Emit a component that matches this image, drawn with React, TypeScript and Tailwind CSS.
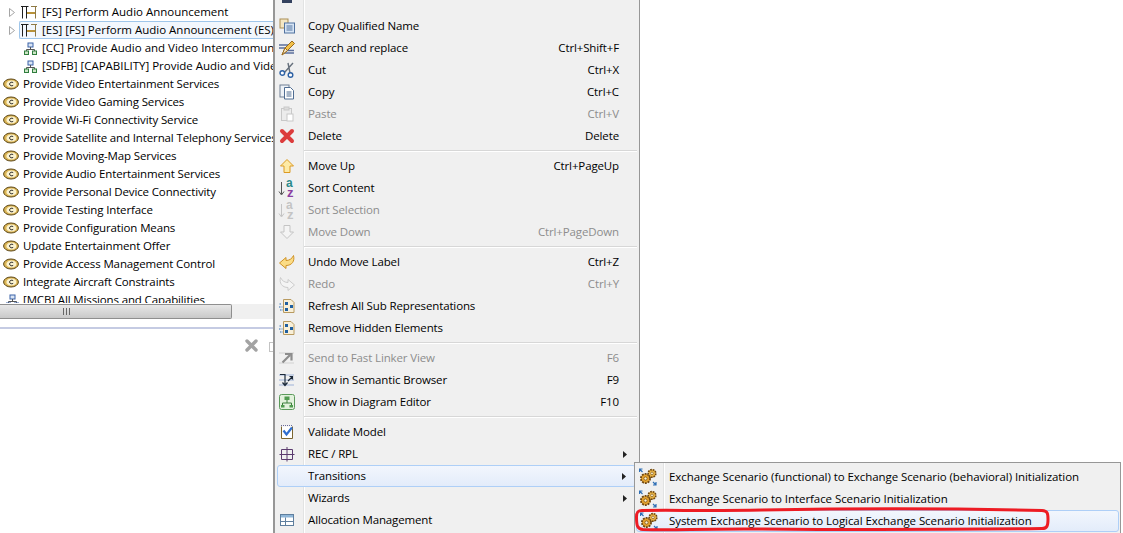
import { ReactNode } from 'react';

const font = { fontFamily: '"Open Sans", "Noto Sans", sans-serif' };

const CapIcon = () => (
  <svg width="16" height="12" viewBox="0 0 16 12" className="shrink-0">
    <ellipse cx="8" cy="6" rx="7.4" ry="5" fill="#dcb656" stroke="#5a4412" strokeWidth="1" />
    <ellipse cx="8.4" cy="6" rx="5" ry="3.6" fill="#fbf3d0" />
    <path d="M10.2 4.6 C8.6 3.6 6.6 4.4 6.6 6 C6.6 7.6 8.6 8.4 10.2 7.4" fill="none" stroke="#1c1c1c" strokeWidth="0.9" />
  </svg>
);

const ScenarioIcon = () => (
  <svg width="16" height="14" viewBox="0 0 16 14" className="shrink-0">
    <path d="M0 1.5 H7.5 M1.5 1 V13.5 M5.5 1 V13.5" stroke="#1f1f1f" strokeWidth="1" fill="none" />
    <path d="M6 8 H15" stroke="#b8923a" strokeWidth="2" />
    <path d="M10 1.5 H16 M14.5 1 V13.5" stroke="#8f7a45" strokeWidth="1" fill="none" />
  </svg>
);

const TreeIcon = ({ color = '#2f7d3d' }: { color?: string }) => (
  <svg width="13" height="13" viewBox="0 0 13 13" className="shrink-0">
    <rect x="4" y="1" width="5" height="4" fill="#dbe6f5" stroke="#3a62a8" />
    <path d="M6.5 5 V7.5 M2.5 9 V7.5 H10.5 V9" stroke="#555" fill="none" />
    <rect x="0.5" y="9" width="4" height="3.5" fill="#cfe6c8" stroke={color} />
    <rect x="8.5" y="9" width="4" height="3.5" fill="#cfe6c8" stroke={color} />
  </svg>
);

const Caret = () => (
  <svg width="6" height="9" viewBox="0 0 6 9" className="shrink-0">
    <path d="M0.5 0.5 L5.5 4.5 L0.5 8.5 Z" fill="#fff" stroke="#a5a5a5" />
  </svg>
);

const Gears = () => (
  <svg width="18" height="18" viewBox="0 0 18 18">
    <circle cx="6.5" cy="10.5" r="4.6" fill="#e3a22e" stroke="#6e4610" strokeWidth="1.8" strokeDasharray="1.9 1" />
    <circle cx="6.5" cy="10.5" r="1.6" fill="#fff3cf" stroke="#6e4610" strokeWidth="0.7" />
    <circle cx="13" cy="5.4" r="3.8" fill="#eab444" stroke="#6e4610" strokeWidth="1.6" strokeDasharray="1.7 0.9" />
    <circle cx="13" cy="5.4" r="1.3" fill="#fff3cf" stroke="#6e4610" strokeWidth="0.6" />
    <path d="M0.5 1 L3.5 4 M0.5 4 V1 H3.5" stroke="#2f6fb5" strokeWidth="1.2" fill="none" />
    <path d="M17 17 L14 14 M17 14 V17 H14" stroke="#2f6fb5" strokeWidth="1.2" fill="none" />
  </svg>
);

const DiagramIcon = () => (
  <svg width="16" height="16" viewBox="0 0 16 16">
    <path d="M4.5 1.5 H12 L15 4.5 V14.5 H4.5 Z" fill="#f8efd8" stroke="#b89a60" />
    <rect x="6" y="4" width="3" height="3" fill="#1f5fa0" />
    <rect x="11" y="7" width="3" height="3" fill="#1f5fa0" />
    <rect x="6" y="10" width="3" height="3" fill="#1f5fa0" />
    <path d="M0.5 6 H3 M0 9 H3.5 M1 12 H4" stroke="#2f6fb5" strokeDasharray="1.5 1" />
  </svg>
);

const icons: Record<string, ReactNode> = {
  qualified: (
    <svg width="16" height="16" viewBox="0 0 16 16">
      <rect x="1" y="1" width="8" height="9" fill="#f4e7c4" stroke="#a98d55" />
      <rect x="5.5" y="5" width="10" height="10" fill="#d7e5f5" stroke="#51729f" />
      <path d="M7.5 8 H13.5 M7.5 10 H13.5 M7.5 12 H13.5" stroke="#51729f" />
    </svg>
  ),
  search: (
    <svg width="16" height="16" viewBox="0 0 16 16">
      <path d="M0 5 H9 M0 8 H7 M5 13 H15 M7 10.5 H15" stroke="#5a6d9a" strokeWidth="1.5" />
      <path d="M3 15 L6 8 L13 1 L15.5 3.5 L8.5 10.5 Z" fill="#f2c04a" stroke="#9a6b1c" />
      <path d="M3 15 L6 8 L8.5 10.5 Z" fill="#f7ead0" stroke="#9a6b1c" />
    </svg>
  ),
  cut: (
    <svg width="16" height="16" viewBox="0 0 16 16">
      <path d="M14 1 L5 11 M9 1 L11 11" stroke="#66707c" strokeWidth="1.4" fill="none" />
      <circle cx="3.3" cy="11" r="2.3" fill="#fff" stroke="#2e62a5" strokeWidth="1.4" />
      <circle cx="11.5" cy="13" r="2.3" fill="#fff" stroke="#2e62a5" strokeWidth="1.4" />
    </svg>
  ),
  copy: (
    <svg width="16" height="16" viewBox="0 0 16 16">
      <rect x="1" y="1" width="9" height="12" fill="#eef2f7" stroke="#6f7f94" />
      <path d="M5.5 3.5 H11.5 L14.5 6.5 V15 H5.5 Z" fill="#fff" stroke="#4f6c92" />
      <path d="M7.5 8 H12.5 M7.5 10 H12.5 M7.5 12 H12.5" stroke="#4f6c92" />
    </svg>
  ),
  paste: (
    <svg width="16" height="16" viewBox="0 0 16 16">
      <rect x="2.5" y="2.5" width="10" height="12" fill="#ececec" stroke="#c8c8c8" />
      <rect x="5" y="1" width="5" height="3" fill="#dcdcdc" stroke="#c8c8c8" />
      <rect x="8" y="8" width="6" height="7" fill="#fff" stroke="#c8c8c8" />
    </svg>
  ),
  del: (
    <svg width="16" height="16" viewBox="0 0 16 16">
      <path d="M3 3 L13 13 M13 3 L3 13" stroke="#dc3c3c" strokeWidth="4" strokeLinecap="round" />
    </svg>
  ),
  up: (
    <svg width="16" height="16" viewBox="0 0 16 16">
      <path d="M8 1.5 L14.5 8 H11 V14.5 H5 V8 H1.5 Z" fill="#fdeaa6" stroke="#dc9a22" />
    </svg>
  ),
  sort: (
    <svg width="18" height="18" viewBox="0 0 18 18" fontFamily="Liberation Sans, sans-serif">
      <path d="M3.5 3 V15 M1 12.5 L3.5 16 L6 12.5" stroke="#555" fill="none" />
      <text x="8" y="8" fontSize="12" fontWeight="700" fill="#2a8a8a">a</text>
      <text x="9" y="17.5" fontSize="13" fontWeight="700" fill="#8a3fa0">z</text>
    </svg>
  ),
  sortOff: (
    <svg width="18" height="18" viewBox="0 0 18 18" fontFamily="Liberation Sans, sans-serif">
      <path d="M3.5 3 V15 M1 12.5 L3.5 16 L6 12.5" stroke="#c4c4c4" fill="none" />
      <text x="8" y="8" fontSize="12" fontWeight="700" fill="#c4c4c4">a</text>
      <text x="9" y="17.5" fontSize="13" fontWeight="700" fill="#c4c4c4">z</text>
    </svg>
  ),
  down: (
    <svg width="16" height="16" viewBox="0 0 16 16">
      <path d="M8 14.5 L14.5 8 H11 V1.5 H5 V8 H1.5 Z" fill="#f4f4f4" stroke="#c4c4c4" />
    </svg>
  ),
  undo: (
    <svg width="16" height="16" viewBox="0 0 16 16">
      <path d="M0.5 9 L7 3.5 V6.5 C10 6.5 13 5 14.5 1.5 C16 7 13 11.5 7 11.5 V14.5 Z" fill="#fbdc85" stroke="#cf9226" />
    </svg>
  ),
  redo: (
    <svg width="16" height="16" viewBox="0 0 16 16">
      <path d="M15.5 9 L9 3.5 V6.5 C6 6.5 3 5 1.5 1.5 C0 7 3 11.5 9 11.5 V14.5 Z" fill="#f4f4f4" stroke="#cccccc" />
    </svg>
  ),
  diagram: <DiagramIcon />,
  linker: (
    <svg width="16" height="16" viewBox="0 0 16 16">
      <path d="M0 3 H15 M0 13 H15" stroke="#dcdcdc" strokeWidth="1.5" />
      <path d="M3.5 12.5 L11 5 M6 4 H12.5 V10.5" stroke="#8d8d8d" strokeWidth="2.2" fill="none" />
    </svg>
  ),
  semantic: (
    <svg width="16" height="16" viewBox="0 0 16 16">
      <path d="M0 3 H15 M0 8 H15 M0 13 H15" stroke="#b9c6e0" strokeWidth="1.5" />
      <path d="M1 2.5 H6 V13 M3.5 10.5 L6 13.5 L8.5 10.5 M9 9 L13 5 M10.5 4.5 H13.5 V7.5" stroke="#1c2a3a" strokeWidth="1.2" fill="none" />
    </svg>
  ),
  editor: (
    <svg width="16" height="16" viewBox="0 0 16 16">
      <rect x="0.5" y="0.5" width="15" height="15" rx="2" fill="#e2f1dc" stroke="#5b9a5b" />
      <rect x="5.5" y="2.5" width="5" height="3.5" fill="#4f9a4f" />
      <path d="M8 6 V9 M3.5 11 V9 H12.5 V11" stroke="#3c7f3c" fill="none" />
      <rect x="2" y="11" width="3.5" height="2.5" fill="#4f9a4f" />
      <rect x="10.5" y="11" width="3.5" height="2.5" fill="#4f9a4f" />
    </svg>
  ),
  validate: (
    <svg width="16" height="16" viewBox="0 0 16 16">
      <path d="M2.5 2.5 V14.5 H13.5 V2.5" fill="#fff" stroke="#7a6530" />
      <path d="M2 1.5 H14" stroke="#6a6a9a" strokeDasharray="1 1" />
      <path d="M4.5 6.5 L7.5 10.5 L13 3.5" stroke="#2f6fd0" strokeWidth="2.2" fill="none" />
    </svg>
  ),
  rec: (
    <svg width="16" height="16" viewBox="0 0 16 16">
      <path d="M2.5 3.5 H13.5 V13.5 H2.5 Z M8 1 V15.5 M0.5 8.5 H15.5" stroke="#5b3a6e" fill="none" />
    </svg>
  ),
  alloc: (
    <svg width="16" height="16" viewBox="0 0 16 16">
      <rect x="1.5" y="2.5" width="13" height="11" fill="#fff" stroke="#5f7f9e" />
      <rect x="2" y="3" width="12" height="2.5" fill="#8fb6d8" />
      <path d="M6.5 5.5 V13.5 M1.5 9.5 H14.5" stroke="#5f7f9e" />
    </svg>
  ),
};

type Item = { label: string; key?: string; icon?: string; off?: boolean; sub?: boolean; hot?: boolean };

const groups: Item[][] = [
  [
    { label: 'Copy Qualified Name', icon: 'qualified' },
    { label: 'Search and replace', key: 'Ctrl+Shift+F', icon: 'search' },
    { label: 'Cut', key: 'Ctrl+X', icon: 'cut' },
    { label: 'Copy', key: 'Ctrl+C', icon: 'copy' },
    { label: 'Paste', key: 'Ctrl+V', icon: 'paste', off: true },
    { label: 'Delete', key: 'Delete', icon: 'del' },
  ],
  [
    { label: 'Move Up', key: 'Ctrl+PageUp', icon: 'up' },
    { label: 'Sort Content', icon: 'sort' },
    { label: 'Sort Selection', icon: 'sortOff', off: true },
    { label: 'Move Down', key: 'Ctrl+PageDown', icon: 'down', off: true },
  ],
  [
    { label: 'Undo Move Label', key: 'Ctrl+Z', icon: 'undo' },
    { label: 'Redo', key: 'Ctrl+Y', icon: 'redo', off: true },
    { label: 'Refresh All Sub Representations', icon: 'diagram' },
    { label: 'Remove Hidden Elements', icon: 'diagram' },
  ],
  [
    { label: 'Send to Fast Linker View', key: 'F6', icon: 'linker', off: true },
    { label: 'Show in Semantic Browser', key: 'F9', icon: 'semantic' },
    { label: 'Show in Diagram Editor', key: 'F10', icon: 'editor' },
  ],
  [
    { label: 'Validate Model', icon: 'validate' },
    { label: 'REC / RPL', icon: 'rec', sub: true },
    { label: 'Transitions', sub: true, hot: true },
    { label: 'Wizards', sub: true },
    { label: 'Allocation Management', icon: 'alloc' },
  ],
];

const capabilities = [
  'Provide Video Entertainment Services',
  'Provide Video Gaming Services',
  'Provide Wi-Fi Connectivity Service',
  'Provide Satellite and Internal Telephony Services',
  'Provide Moving-Map Services',
  'Provide Audio Entertainment Services',
  'Provide Personal Device Connectivity',
  'Provide Testing Interface',
  'Provide Configuration Means',
  'Update Entertainment Offer',
  'Provide Access Management Control',
  'Integrate Aircraft Constraints',
];

const subItems = [
  'Exchange Scenario (functional) to Exchange Scenario (behavioral) Initialization',
  'Exchange Scenario to Interface Scenario Initialization',
  'System Exchange Scenario to Logical Exchange Scenario Initialization',
];

const Arrow = () => (
  <svg width="4" height="7" viewBox="0 0 4 7" className="shrink-0">
    <path d="M0 0 L4 3.5 L0 7 Z" fill="#222" />
  </svg>
);

const MenuRow = ({ item }: { item: Item }) => (
  <div
    className={`flex h-[22px] items-center ${item.hot ? 'ml-[2px] mr-[3px] rounded-[3px] border border-[#aecff7] bg-gradient-to-b from-[#f2f6fd] to-[#e3ecfa]' : 'mx-[3px]'}`}
  >
    <div className="flex w-[18px] shrink-0 items-center justify-center">{item.icon ? icons[item.icon] : null}</div>
    <span className={`ml-[12px] whitespace-nowrap ${item.off ? 'text-[#8d8d8d]' : 'text-black'}`}>{item.label}</span>
    <span className={`ml-auto mr-[17px] whitespace-nowrap ${item.off ? 'text-[#8d8d8d]' : 'text-black'}`}>{item.key}</span>
    {item.sub ? <div className="-ml-[6px] mr-[9px]"><Arrow /></div> : null}
  </div>
);

const TreeRow = ({ children, className = '' }: { children: ReactNode; className?: string }) => (
  <div className={`flex h-[18px] items-center whitespace-nowrap text-black ${className}`}>{children}</div>
);

export default function App() {
  return (
    <div className="relative flex h-[533px] w-[1123px] overflow-hidden bg-white text-[11.5px] leading-none tracking-[-0.13px]" style={font}>
      {/* Left: project explorer */}
      <div className="flex w-[273px] shrink-0 flex-col">
        <div className="h-[303px] overflow-hidden pt-[3px]">
          <TreeRow className="pl-[9px] tracking-[-0.01px]">
            <Caret />
            <span className="ml-[6px]"><ScenarioIcon /></span>
            <span className="ml-[5px]">[FS] Perform Audio Announcement</span>
          </TreeRow>
          <TreeRow className="pl-[9px] tracking-[-0.01px]">
            <Caret />
            <div className="ml-[4px] flex h-[18px] flex-1 items-center overflow-hidden rounded-l-[2px] border border-r-0 border-[#9fc6ea] bg-[#f2f7fd] pl-[1px]">
              <ScenarioIcon />
              <span className="ml-[5px]">[ES] [FS] Perform Audio Announcement (ES)</span>
            </div>
          </TreeRow>
          <TreeRow className="overflow-hidden pl-[24px] tracking-[-0.01px]">
            <TreeIcon />
            <span className="ml-[5px]">[CC] Provide Audio and Video Intercommunication Services</span>
          </TreeRow>
          <TreeRow className="overflow-hidden pl-[24px] tracking-[-0.01px]">
            <TreeIcon />
            <span className="ml-[5px]">[SDFB] [CAPABILITY] Provide Audio and Video Intercommunication</span>
          </TreeRow>
          {capabilities.map((name) => (
            <TreeRow key={name} className="overflow-hidden pl-[3px]">
              <CapIcon />
              <span className="ml-[4px]">{name}</span>
            </TreeRow>
          ))}
          <TreeRow className="overflow-hidden pl-[6px]">
            <TreeIcon color="#3a62a8" />
            <span className="ml-[4px]">[MCB] All Missions and Capabilities</span>
          </TreeRow>
        </div>
        {/* horizontal scroll bar */}
        <div className="mt-[1px] flex h-[15px] items-stretch bg-[#f0f0f0]">
          <div className="flex w-[232px] items-center rounded-r-[2px] border border-l-0 border-[#8f8f8f] bg-gradient-to-b from-[#e8e8e8] to-[#c9c9c9] pl-[63px]">
            <div className="flex h-[7px] w-[7px] justify-center border-x border-[#666]">
              <div className="h-[7px] w-px bg-[#666]" />
            </div>
          </div>
        </div>
        <div className="mt-[8px] h-[2px] bg-[#c5cbe3]" />
        <div className="flex justify-end pt-[9px]">
          <svg width="13" height="13" viewBox="0 0 13 13" className="mr-[11px] mt-[1px]">
            <path d="M2 2 L11 11 M11 2 L2 11" stroke="#a3a3a3" strokeWidth="3.4" strokeLinecap="round" />
          </svg>
          <div className="mt-[4px] h-[10px] w-[4px] border border-r-0 border-[#c3c3c3]" />
        </div>
      </div>

      {/* Context menu */}
      <div className="relative h-[533px] w-[367px] shrink-0 border-x border-l-2 border-x-[#979797] bg-[#f0f0f0] pt-[11px]">
        <div className="absolute bottom-0 left-[28px] top-0 w-[2px] border-l border-[#e2e3e3] bg-white" />
        <div className="absolute left-[4px] top-[-11px]">
          <svg width="16" height="16" viewBox="0 0 16 16">
            <path d="M3 2 H13 V14 H3 Z" fill="#33415e" />
          </svg>
        </div>
        {groups.map((group, i) => (
          <div key={i} className="relative">
            {i > 0 ? <div className="my-[3px] ml-[29px] mr-[2px] h-[2px] border-t border-[#d7d7d7] bg-white" /> : <div className="h-[4px]" />}
            {group.map((item) => (
              <MenuRow key={item.label} item={item} />
            ))}
          </div>
        ))}
      </div>

      <div className="flex-1 bg-white" />

      {/* Submenu */}
      <div className="absolute left-[634px] top-[462px] h-[80px] w-[487px] border border-[#979797] bg-[#f0f0f0] pt-[3px] tracking-[-0.07px]">
        <div className="absolute bottom-0 left-[28px] top-0 w-[2px] border-l border-[#e2e3e3] bg-white" />
        {subItems.map((label, i) => (
          <div
            key={label}
            className={`relative mx-px flex h-[22px] items-center ${i === 2 ? 'rounded-[3px] border border-[#aecff7] bg-gradient-to-b from-[#f2f6fd] to-[#e3ecfa]' : ''}`}
          >
            <div className={`flex shrink-0 justify-center ${i === 2 ? 'w-[23px]' : 'w-[24px]'}`}><Gears /></div>
            <span className="ml-[9px] whitespace-nowrap text-black">{label}</span>
          </div>
        ))}
      </div>

      {/* Red annotation */}
      <svg className="absolute left-[632px] top-[505px]" width="424" height="28" viewBox="0 0 424 28" fill="none">
        <path
          d="M10 5.5 C6 5.5 4.5 7 4.5 12 C4.5 20 5 24 11 24.5 C50 25.5 60 23.5 130 24 C230 25 330 24.5 410 23.5 C415 23.5 416 21 416 14 C416 8 415.5 6 410 5.5 C330 3.5 240 3 130 5 C80 6 40 5 10 5.5 Z"
          stroke="#ed1c24"
          strokeWidth="3"
        />
      </svg>
    </div>
  );
}
